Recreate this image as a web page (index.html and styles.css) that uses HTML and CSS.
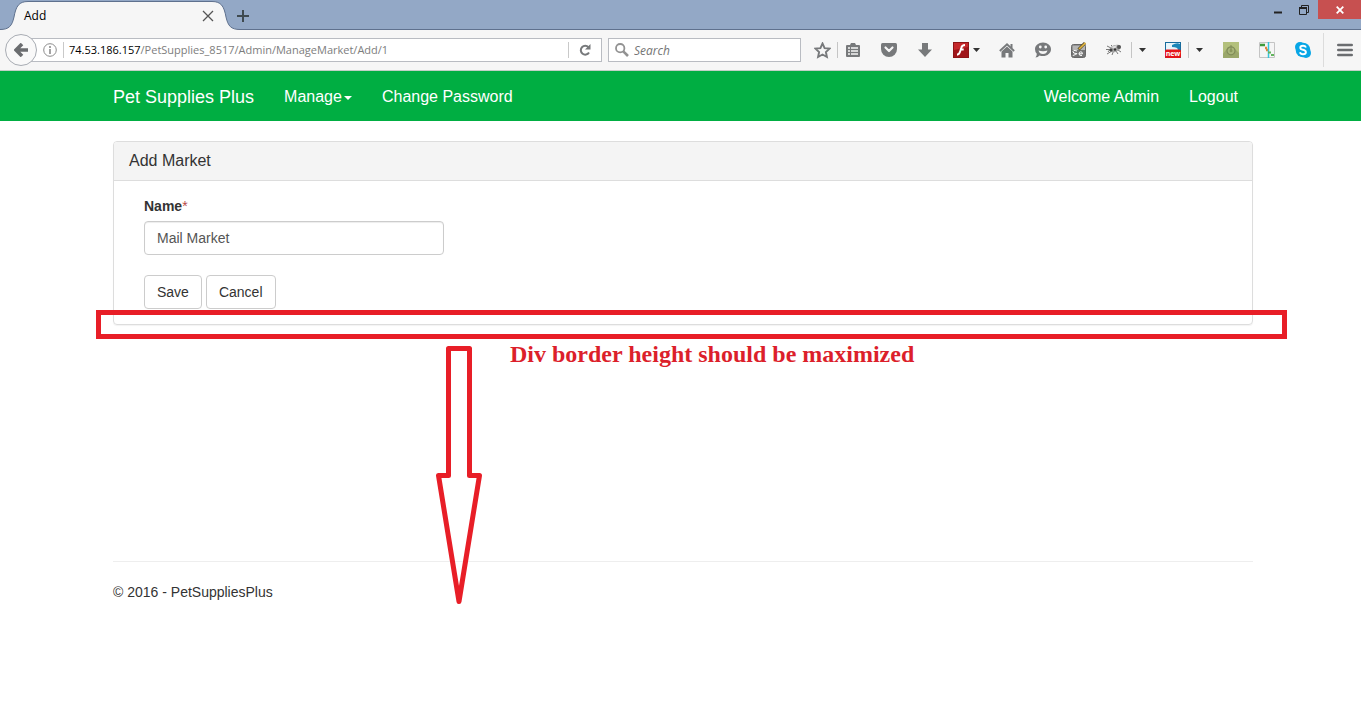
FILE: index.html
```html
<!DOCTYPE html>
<html lang="en">
<head>
<meta charset="utf-8">
<title>Add</title>
<link rel="stylesheet" href="styles.css">
</head>
<body>
<header class="browser">
  <div class="titlebar">
    <svg class="tab-shape" viewBox="0 0 240 30" aria-hidden="true"><path d="M0 29.500C9 29.500 12 26 14 17C16 6 19 1.500 28 1.500H212C221 1.500 224 6 226 17C228 26 231 29.500 240 29.500V30H0Z" fill="#f6f6f6"/><path d="M0 29.500C9 29.500 12 26 14 17C16 6 19 1.500 28 1.500H212C221 1.500 224 6 226 17C228 26 231 29.500 240 29.500" fill="none" stroke="#5f718e"/></svg>
    <div class="tab">
      <span class="tab-title">Add</span>
      <button class="plain tab-close" aria-label="Close tab"><svg width="12" height="12" viewBox="0 0 12 12"><path d="M1 1L11 11M11 1L1 11" stroke="#555" stroke-width="1.300"/></svg></button>
    </div>
    <button class="plain new-tab" aria-label="New tab"><svg width="12" height="12" viewBox="0 0 12 12"><path d="M6 0V12M0 6H12" stroke="#3f4a50" stroke-width="2"/></svg></button>
    <div class="window-buttons">
      <button class="plain win" aria-label="Minimize"><svg width="10" height="10" viewBox="0 0 10 10"><path d="M1 7.500H9" stroke="#222" stroke-width="2"/></svg></button>
      <button class="plain win" aria-label="Restore"><svg width="10" height="10" viewBox="0 0 10 10"><path d="M2.500 2V.5H9.500V7.500H8" fill="none" stroke="#222"/><path d="M.5 9.500V2.500H7.500V9.500Z" fill="none" stroke="#222"/><path d="M0 3H8" stroke="#222" stroke-width="2"/></svg></button>
      <button class="plain win win-close" aria-label="Close"><svg width="8" height="8" viewBox="0 0 8 8"><path d="M.7.700L7.300 7.300M7.300.700L.7 7.300" stroke="#fff" stroke-width="1.800"/></svg></button>
    </div>
  </div>
  <div class="toolbar">
    <button class="back" aria-label="Back"><svg width="14" height="14" viewBox="0 0 14 14"><path d="M8 1L2 7L8 13M2.500 7H14" fill="none" stroke="#6b6d70" stroke-width="3.600"/></svg></button>
    <div class="url-bar">
      <svg width="14" height="14" viewBox="0 0 14 14" aria-hidden="true"><circle cx="7" cy="7" r="6.300" fill="none" stroke="#8c8c8c"/><path d="M7 6V11M7 3V5" stroke="#8c8c8c" stroke-width="1.600"/></svg>
      <div class="url-text" role="textbox" aria-label="Address" contenteditable="true" spellcheck="false"><b>74.53.186.157</b>/PetSupplies_8517/Admin/ManageMarket/Add/1</div>
      <button class="plain reload" aria-label="Reload"><svg width="12" height="12" viewBox="0 0 12 12"><path d="M9.500 3.300A4.400 4.400 0 1 0 10 8.500" fill="none" stroke="#77797b" stroke-width="2"/><path d="M11.500 0V5.600H6Z" fill="#77797b"/></svg></button>
    </div>
    <div class="search-bar">
      <svg width="14" height="14" viewBox="0 0 14 14" aria-hidden="true"><circle cx="5.200" cy="5.200" r="4.200" fill="none" stroke="#929292" stroke-width="1.800"/><path d="M8.300 8.300L13 13" stroke="#929292" stroke-width="2.600"/></svg>
      <input type="text" placeholder="Search" aria-label="Search">
    </div>
    <div class="tools">
      <button class="plain tool-small" aria-label="Bookmark"><svg width="17" height="17" viewBox="0 0 17 17"><path d="M8.500 1.500L10.600 6.100L15.600 6.600L11.900 10L12.900 15L8.500 12.500L4.100 15L5.100 10L1.400 6.600L6.400 6.100Z" fill="none" stroke="#77797b" stroke-width="1.900"/></svg></button>
      <i class="sep"></i>
      <button class="plain tool-small list" aria-label="Bookmarks list"><svg width="14" height="14" viewBox="0 0 14 14"><path d="M4 2L5 0H9L10 2H13Q14 2 14 3V13Q14 14 13 14H1Q0 14 0 13V3Q0 2 1 2Z" fill="#77797b"/><path d="M2 5H4M5 5H12M2 8H4M5 8H12M2 11H4M5 11H12" stroke="#f6f6f6" stroke-width="1.500"/></svg></button>
      <button class="plain tool" aria-label="Pocket"><svg width="16" height="14" viewBox="0 0 16 14"><path d="M1.500 0H14.500Q16 0 16 1.500V6A8 8 0 0 1 0 6V1.500Q0 0 1.500 0Z" fill="#77797b"/><path d="M4.500 4.500L8 8L11.500 4.500" fill="none" stroke="#f6f6f6" stroke-width="2.200" stroke-linecap="round" stroke-linejoin="round"/></svg></button>
      <button class="plain tool" aria-label="Downloads"><svg width="14" height="14" viewBox="0 0 14 14"><path d="M4 0H10V6.500H14L7 14L0 6.500H4Z" fill="#77797b"/></svg></button>
      <button class="plain tool-flash" aria-label="Flash"><svg width="16" height="16" viewBox="0 0 16 16"><path d="M0 0H16V16H0Z" fill="#8d1416"/><path d="M1 1H15V15H1Z" fill="#c4282b"/><path d="M1 8L15 5V15H1Z" fill="#a0151a"/><path d="M12 3Q9 3 8.200 6L7.300 9Q6.400 12.500 4 12.700M7 7.500H10.700" fill="none" stroke="#fff" stroke-width="1.900"/></svg><svg width="7" height="4" viewBox="0 0 7 4"><path d="M0 0H7L3.500 4Z" fill="#333"/></svg></button>
      <button class="plain tool" aria-label="Home"><svg width="16" height="15" viewBox="0 0 16 15"><path d="M.8 8L8 1.300L15.200 8" fill="none" stroke="#77797b" stroke-width="1.800"/><path d="M11.500 1H13.500V5H11.500ZM2.500 8.500L8 3.500L13.500 8.500V14.500H9.500V10H6.500V14.500H2.500Z" fill="#77797b"/></svg></button>
      <button class="plain tool" aria-label="Chat"><svg width="16" height="16" viewBox="0 0 16 16"><path d="M8 .5C12.500.500 16 3.500 16 7.200C16 11 12.500 14 8 14Q6 14 4.500 13.500Q3 15.500 .5 15.500Q2 13.500 1.800 11.800Q0 9.800 0 7.200C0 3.500 3.500.500 8 .5Z" fill="#77797b"/><circle cx="5.300" cy="5" r="1.400" fill="#f6f6f6"/><circle cx="10.700" cy="5" r="1.400" fill="#f6f6f6"/><path d="M3.500 8.500Q8 10 12.500 8.500Q11.500 12 8 12T3.500 8.500Z" fill="#f6f6f6"/></svg></button>
      <button class="plain tool" aria-label="Selenium"><svg width="16" height="16" viewBox="0 0 16 16"><rect x=".5" y="2.500" width="14" height="13" rx="2" fill="#757575" stroke="#686868"/><path d="M1.500 3.500H14V8H1.500Z" fill="#b5b5b5"/><path d="M6 9Q2 7.500 2 9.500T5 11.500T1.800 13.500M8 11.800H11.500Q11.500 9.800 9.800 9.800T8 11.800T11 13.500" fill="none" stroke="#fff"/><path d="M7.500 7.500L14 1" stroke="#554b30" stroke-width="3"/><path d="M8 7L14.500 .8" stroke="#e2b53e" stroke-width="1.700"/></svg></button>
      <button class="plain tool-bug" aria-label="Firebug"><svg width="16" height="16" viewBox="0 0 16 16"><path d="M1 4L5 6L2 10M5 5L8 8L6 13M10 9L12 12M12 8L15 10M0 7.500H5M5 3L8 6M1 12L6 9" fill="none" stroke="#777"/><ellipse cx="9" cy="6.500" rx="6" ry="3.400" transform="rotate(-20 9 6.500)" fill="#a4a4a4"/><path d="M5 5L11 3L9 7Z" fill="#ddd"/><circle cx="13" cy="5" r="2" fill="#555"/><circle cx="5" cy="8" r="1.600" fill="#444"/><circle cx="9" cy="7.500" r="1.200" fill="#333"/></svg></button>
      <i class="sep"></i>
      <button class="plain tool-caret spaced" aria-label="Firebug options"><svg width="7" height="4" viewBox="0 0 7 4"><path d="M0 0H7L3.500 4Z" fill="#333"/></svg></button>
      <button class="plain tool-small" aria-label="New"><svg width="16" height="16" viewBox="0 0 16 16"><path d="M0 0H16V16H0Z" fill="#176b9c"/><path d="M1 1H15V8H1Z" fill="#e8f5fa"/><path d="M7 3Q12 0 15 2V8H13Q13 5 7 5Z" fill="#1b86b8"/><rect y="7.500" width="16" height="8.500" rx="1.500" fill="#e51419"/><text class="new-label" x="8" y="14" text-anchor="middle" fill="#fff">new</text></svg></button>
      <i class="sep"></i>
      <button class="plain tool-caret" aria-label="New options"><svg width="7" height="4" viewBox="0 0 7 4"><path d="M0 0H7L3.500 4Z" fill="#333"/></svg></button>
      <button class="plain tool gear" aria-label="Power"><svg width="16" height="16" viewBox="0 0 16 16"><path d="M0 0H16V16H0Z" fill="#b3c07c"/><path d="M0 12L5 5L12 7L16 11V16H0Z" fill="#9aa76a"/><circle cx="8" cy="8.800" r="4" fill="#a8b57a" stroke="#808c58" stroke-width="1.200"/><circle cx="8" cy="8.800" r="1.500" fill="#8b985d"/><path d="M8 3V8" stroke="#808c58"/></svg></button>
      <button class="plain tool" aria-label="Chart"><svg width="16" height="16" viewBox="0 0 16 16"><path d="M.5.500H15.500V15.500H.5Z" fill="#f5f5f5" stroke="#c4c4c4"/><path d="M1 3H6" stroke="#3f9a3c" stroke-width="2.500"/><path d="M6 6H8M7 8H9" stroke="#e3863a" stroke-width="2.500"/><path d="M9.500 0V16" stroke="#35c5dc" stroke-width="1.500"/><path d="M9 10.500H12M12 13H15" stroke="#62b45d" stroke-width="2.200"/></svg></button>
      <button class="plain tool" aria-label="Skype"><svg width="16" height="16" viewBox="0 0 16 16"><circle cx="5" cy="5" r="5" fill="#08a6e6"/><circle cx="11" cy="11" r="5" fill="#08a6e6"/><circle cx="8" cy="8" r="7.300" fill="#08a6e6"/><path d="M11 5.500Q10.300 3.800 8 3.800Q5.300 3.800 5.300 5.700Q5.300 7.200 8 7.800T10.900 10.200Q10.900 12.200 8 12.200Q5.500 12.200 5 10.300" fill="none" stroke="#fff" stroke-width="1.900"/></svg></button>
      <button class="menu" aria-label="Menu"><svg width="16" height="14" viewBox="0 0 16 14"><path d="M1.300 2H14.700M1.300 7H14.700M1.300 12H14.700" stroke="#6b6d70" stroke-width="2.600" stroke-linecap="round"/></svg></button>
    </div>
  </div>
</header>

<nav class="navbar">
  <div class="container nav-row">
    <a class="brand" href="#">Pet Supplies Plus</a>
    <a class="nav-link" href="#">Manage<span class="caret"></span></a>
    <a class="nav-link" href="#">Change Password</a>
    <a class="nav-link nav-right" href="#">Welcome Admin</a>
    <a class="nav-link" href="#">Logout</a>
  </div>
</nav>

<div class="page">
  <div class="container content">
    <main class="main">
      <section class="panel">
        <h1 class="panel-heading">Add Market</h1>
        <form class="panel-body">
          <label for="name">Name<span class="required">*</span></label>
          <input class="field" id="name" type="text" value="Mail Market">
          <div class="actions">
            <button class="btn" type="button">Save</button>
            <button class="btn" type="button">Cancel</button>
          </div>
        </form>
      </section>
    </main>
    <footer class="footer">© 2016 - PetSuppliesPlus</footer>
    <div class="note-box"></div>
    <svg class="note-arrow" width="48" height="262" viewBox="0 0 48 262" aria-hidden="true"><path d="M13.500 4.500H34.500V131.500H44.500L24 257.500L3.500 131.500H13.500Z" fill="none" stroke="#e81e27" stroke-width="5" stroke-linejoin="round"/></svg>
    <p class="note-text">Div border height should be maximized</p>
  </div>
</div>
</body>
</html>
```

FILE: styles.css
```css
* { box-sizing: border-box; }
body {
  margin: 0;
  background: #fff;
  color: #333;
  font: 14px/20px "Liberation Sans", Arial, sans-serif;
}
svg { display: block; flex: none; }
a { color: inherit; text-decoration: none; }
.plain {
  display: flex;
  align-items: center;
  justify-content: center;
  padding: 0;
  border: 0;
  background: none;
}

/* Browser window */
.browser { font: 12px/16px "Open Sans", "Noto Sans", sans-serif; }
.titlebar {
  position: relative;
  display: flex;
  height: 30px;
  background: #93a8c6;
  border-bottom: 1px solid #5f718e;
}
.tab-shape { position: absolute; left: 0; top: 0; width: 240px; height: 30px; }
.tab {
  position: relative;
  display: flex;
  align-items: center;
  justify-content: space-between;
  width: 230px;
  padding: 3px 16px 0 24px;
  color: #000;
}
.new-tab { width: 26px; padding-top: 3px; }
.window-buttons { display: flex; height: 19px; margin-left: auto; }
.win { width: 26px; }
.win-close { width: 43px; margin-left: 1px; background: #c75050; }
.toolbar {
  display: flex;
  align-items: center;
  height: 41px;
  padding-left: 5px;
  background: #f6f6f6;
  border-bottom: 1px solid #c2cfc6;
}
.back {
  position: relative;
  display: flex;
  align-items: center;
  justify-content: center;
  width: 32px;
  height: 32px;
  padding: 0;
  border: 1px solid #a8acb3;
  border-radius: 50%;
  background: #f9f9f9;
}
.url-bar, .search-bar {
  display: flex;
  align-items: center;
  height: 24px;
  background: #fff;
  border: 1px solid #b9bcc2;
}
.url-bar { flex: 1; margin-left: -6px; padding-left: 11px; }
.url-text {
  flex: 1;
  margin-left: 6px;
  padding-left: 5px;
  border-left: 1px solid #c9c9c9;
  color: #7d7d7d;
  font-size: 11px;
  white-space: nowrap;
}
.url-text b { font-weight: 400; color: #000; }
.reload { width: 33px; height: 16px; border-left: 1px solid #c9c9c9; }
.search-bar { width: 193px; margin-left: 6px; padding-left: 6px; }
.search-bar input {
  flex: 1;
  min-width: 0;
  padding: 1px 0 0 5px;
  border: 0;
  background: none;
  font: inherit;
}
.search-bar input::placeholder { color: #757575; font-style: italic; }
.tools { display: flex; align-items: center; margin-left: 6px; }
.sep { width: 1px; height: 16px; background: #c5c5c5; }
.tool { width: 36px; }
.tool-small { width: 30px; }
.list { margin-right: 3px; }
.tool-flash { width: 46px; gap: 4px; }
.tool-bug { width: 34px; }
.tool-caret { width: 20px; }
.spaced { margin-right: 6px; }
.gear { margin-left: 4px; }
.new-label { font: bold 7px "Open Sans", sans-serif; }
.menu {
  width: 38px;
  height: 34px;
  margin-left: 2px;
  padding: 0 0 0 13px;
  border: 0;
  border-left: 1px solid #dcdcdc;
  background: none;
}

/* Site */
.container { max-width: 1140px; margin: 0 auto; }
.navbar { padding-left: 5px; background: #00ae42; color: #fff; }
.nav-row { display: flex; align-items: center; height: 50px; padding-top: 2px; }
.brand { padding-right: 15px; font-size: 18px; }
.nav-link { padding: 0 15px; font-size: 16px; }
.nav-right { margin-left: auto; }
.caret {
  display: inline-block;
  margin-left: 2px;
  vertical-align: middle;
  border-top: 4px solid;
  border-right: 4px solid transparent;
  border-left: 4px solid transparent;
}
.page { padding-left: 5px; }
.content { position: relative; }
.main { min-height: 440px; padding-top: 20px; }
.panel {
  border: 1px solid #ddd;
  border-radius: 4px;
  box-shadow: 0 1px 1px rgba(0, 0, 0, .05);
}
.panel-heading {
  margin: 0;
  padding: 10px 15px;
  background: #f4f4f4;
  border-bottom: 1px solid #ddd;
  border-radius: 3px 3px 0 0;
  font-size: 16px;
  font-weight: 400;
  line-height: 18px;
}
.panel-body { padding: 15px 30px; }
.panel-body label { display: block; margin-bottom: 5px; font-weight: 700; }
.required { color: #b94a48; font-weight: 400; }
.field {
  display: block;
  width: 300px;
  height: 34px;
  padding: 6px 12px;
  border: 1px solid #ccc;
  border-radius: 4px;
  box-shadow: inset 0 1px 1px rgba(0, 0, 0, .075);
  color: #555;
  font: inherit;
}
.actions { display: flex; gap: 4px; margin-top: 20px; }
.btn {
  padding: 6px 12px;
  border: 1px solid #ccc;
  border-radius: 4px;
  background: #fff;
  color: #333;
  font: inherit;
}
.footer { padding: 20px 0; border-top: 1px solid #eee; }

/* Review notes drawn over the page */
.note-box {
  position: absolute;
  top: 189px;
  left: -17px;
  right: -34px;
  height: 29px;
  border: 5px solid #e81e27;
}
.note-arrow { position: absolute; top: 223px; left: 322px; }
.note-text {
  position: absolute;
  top: 219px;
  left: 397px;
  margin: 0;
  color: #dc1f2b;
  font: bold 24px/28px "Liberation Serif", "Times New Roman", serif;
  white-space: nowrap;
}
```
